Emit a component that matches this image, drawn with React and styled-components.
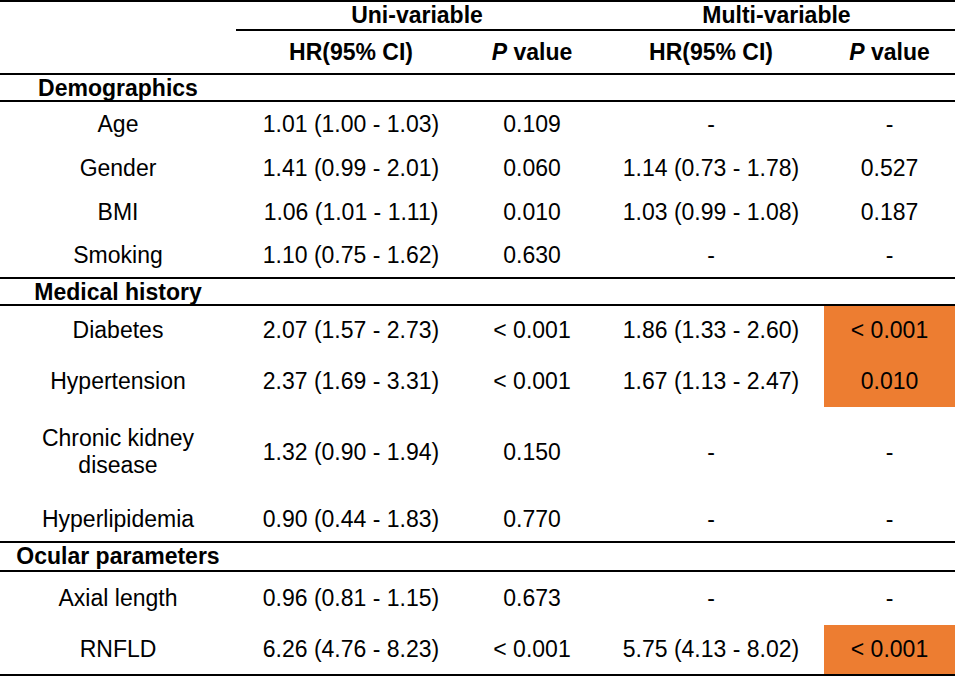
import React from "react";
import styled, { createGlobalStyle } from "styled-components";

const Global = createGlobalStyle`
  html, body { margin: 0; padding: 0; background: #fff; }
  body { font-family: "Liberation Sans", Arial, sans-serif; color: #000; }
`;

const COLS = "236px 230px 132px 226px 131px";
const ORANGE = "#ED7D31";

const Table = styled.div`
  width: 955px;
  border-top: 2px solid #000;
  border-bottom: 2px solid #000;
  font-size: 23px;
  line-height: 27px;
`;

const Row = styled.div`
  display: grid;
  grid-template-columns: ${COLS};
  height: ${(p) => p.$h}px;
  border-bottom: ${(p) => (p.$rule ? "2px solid #000" : "none")};
  box-sizing: content-box;
`;

const Cell = styled.div`
  display: flex;
  align-items: center;
  justify-content: center;
  text-align: center;
  padding: 0 6px;
  background: ${(p) => (p.$hl ? ORANGE : "transparent")};
  font-weight: ${(p) => (p.$bold ? 700 : 400)};
  grid-column: ${(p) => (p.$span ? `span ${p.$span}` : "auto")};
  border-bottom: ${(p) => (p.$under ? "2px solid #000" : "none")};
`;

const Section = styled.div`
  display: grid;
  grid-template-columns: ${COLS};
  height: ${(p) => p.$h}px;
  border-bottom: 2px solid #000;
`;

const SectionTitle = styled.div`
  display: flex;
  align-items: center;
  justify-content: center;
  font-weight: 700;
  white-space: nowrap;
`;

const Ital = styled.i`
  font-style: italic;
`;

const PHead = () => (
  <>
    <Ital>P</Ital>&nbsp;value
  </>
);

const groups = [
  {
    title: "Demographics",
    rows: [
      { h: 44, label: "Age", hr1: "1.01 (1.00 - 1.03)", p1: "0.109", hr2: "-", p2: "-" },
      { h: 44, label: "Gender", hr1: "1.41 (0.99 - 2.01)", p1: "0.060", hr2: "1.14 (0.73 - 1.78)", p2: "0.527" },
      { h: 44, label: "BMI", hr1: "1.06 (1.01 - 1.11)", p1: "0.010", hr2: "1.03 (0.99 - 1.08)", p2: "0.187" },
      { h: 43, label: "Smoking", hr1: "1.10 (0.75 - 1.62)", p1: "0.630", hr2: "-", p2: "-" },
    ],
  },
  {
    title: "Medical history",
    rows: [
      { h: 49, label: "Diabetes", hr1: "2.07 (1.57 - 2.73)", p1: "< 0.001", hr2: "1.86 (1.33 - 2.60)", p2: "< 0.001", hl: true },
      { h: 52, label: "Hypertension", hr1: "2.37 (1.69 - 3.31)", p1: "< 0.001", hr2: "1.67 (1.13 - 2.47)", p2: "0.010", hl: true },
      { h: 90, label: "Chronic kidney disease", hr1: "1.32 (0.90 - 1.94)", p1: "0.150", hr2: "-", p2: "-" },
      { h: 44, label: "Hyperlipidemia", hr1: "0.90 (0.44 - 1.83)", p1: "0.770", hr2: "-", p2: "-" },
    ],
  },
  {
    title: "Ocular parameters",
    rows: [
      { h: 53, label: "Axial length", hr1: "0.96 (0.81 - 1.15)", p1: "0.673", hr2: "-", p2: "-" },
      { h: 49, label: "RNFLD", hr1: "6.26 (4.76 - 8.23)", p1: "< 0.001", hr2: "5.75 (4.13 - 8.02)", p2: "< 0.001", hl: true },
    ],
  },
];

const sectionHeights = [25, 25, 27];

export default function App() {
  return (
    <>
      <Global />
      <Table>
        <Row $h={29}>
          <Cell />
          <Cell $span={2} $bold $under>Uni-variable</Cell>
          <Cell $span={2} $bold $under>Multi-variable</Cell>
        </Row>
        <Row $h={42} $rule>
          <Cell />
          <Cell $bold>HR(95% CI)</Cell>
          <Cell $bold><PHead /></Cell>
          <Cell $bold>HR(95% CI)</Cell>
          <Cell $bold><PHead /></Cell>
        </Row>
        {groups.map((g, gi) => (
          <React.Fragment key={g.title}>
            <Section $h={sectionHeights[gi]}>
              <SectionTitle>{g.title}</SectionTitle>
            </Section>
            {g.rows.map((r, ri) => (
              <Row
                key={r.label}
                $h={r.h}
                $rule={gi < groups.length - 1 && ri === g.rows.length - 1}
              >
                <Cell>{r.label}</Cell>
                <Cell>{r.hr1}</Cell>
                <Cell>{r.p1}</Cell>
                <Cell>{r.hr2}</Cell>
                <Cell $hl={r.hl}>{r.p2}</Cell>
              </Row>
            ))}
          </React.Fragment>
        ))}
      </Table>
    </>
  );
}
